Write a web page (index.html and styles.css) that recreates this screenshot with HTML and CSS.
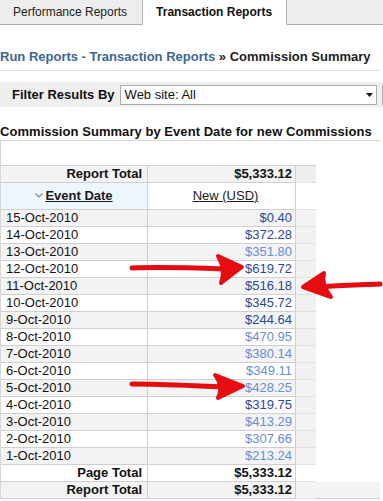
FILE: index.html
```html
<!DOCTYPE html>
<html>
<head>
<meta charset="utf-8">
<link rel="stylesheet" href="styles.css">
</head>
<body>
<div class="page">
  <div class="tabs">
    <div class="tab">Performance Reports</div>
    <div class="tab active">Transaction Reports</div>
    <div class="tab fill"></div>
  </div>

  <div class="crumbs"><span class="crumb-link">Run Reports - Transaction Reports</span> » Commission Summary</div>

  <div class="filter">
    <span class="filter-label">Filter Results By</span>
    <div class="select">
      <span class="select-text">Web site: All</span>
      <svg class="caret" width="7" height="4" viewBox="0 0 7 4"><path d="M0 0H7L3.5 4Z" fill="#111"/></svg>
    </div>
    <div class="next-ctrl"></div>
  </div>

  <div class="title">Commission Summary by Event Date for new Commissions</div>

  <div class="report">
    <table class="grid">
      <colgroup><col class="c1"><col class="c2"><col class="c3"><col class="c4"></colgroup>
      <tr class="top total">
        <td class="lab">Report Total</td><td class="amt">$5,333.12</td><td class="pad"></td><td class="rest"></td>
      </tr>
      <tr class="head">
        <td class="sorted"><svg class="chev" width="8" height="5" viewBox="0 0 8 5"><path d="M0.5 0.5L4 4L7.5 0.5" fill="none" stroke="#8a8a8a" stroke-width="1.2"/></svg><span class="hlink bold">Event Date</span></td>
        <td class="hcol"><span class="hlink">New (USD)</span></td><td class="pad white"></td><td class="rest"></td>
      </tr>
      <tr class="odd"><td>15-Oct-2010</td><td class="num dark">$0.40</td><td class="pad"></td><td class="rest"></td></tr>
      <tr><td>14-Oct-2010</td><td class="num dark">$372.28</td><td class="pad"></td><td class="rest"></td></tr>
      <tr class="odd"><td>13-Oct-2010</td><td class="num light">$351.80</td><td class="pad"></td><td class="rest"></td></tr>
      <tr><td>12-Oct-2010</td><td class="num dark">$619.72</td><td class="pad"></td><td class="rest"></td></tr>
      <tr class="odd"><td>11-Oct-2010</td><td class="num dark">$516.18</td><td class="pad"></td><td class="rest"></td></tr>
      <tr><td>10-Oct-2010</td><td class="num dark">$345.72</td><td class="pad"></td><td class="rest"></td></tr>
      <tr class="odd"><td>9-Oct-2010</td><td class="num dark">$244.64</td><td class="pad"></td><td class="rest"></td></tr>
      <tr><td>8-Oct-2010</td><td class="num light">$470.95</td><td class="pad"></td><td class="rest"></td></tr>
      <tr class="odd"><td>7-Oct-2010</td><td class="num light">$380.14</td><td class="pad"></td><td class="rest"></td></tr>
      <tr><td>6-Oct-2010</td><td class="num light">$349.11</td><td class="pad"></td><td class="rest"></td></tr>
      <tr class="odd"><td>5-Oct-2010</td><td class="num light">$428.25</td><td class="pad"></td><td class="rest"></td></tr>
      <tr><td>4-Oct-2010</td><td class="num dark">$319.75</td><td class="pad"></td><td class="rest"></td></tr>
      <tr class="odd"><td>3-Oct-2010</td><td class="num light">$413.29</td><td class="pad"></td><td class="rest"></td></tr>
      <tr><td>2-Oct-2010</td><td class="num light">$307.66</td><td class="pad"></td><td class="rest"></td></tr>
      <tr class="odd"><td>1-Oct-2010</td><td class="num light">$213.24</td><td class="pad"></td><td class="rest"></td></tr>
      <tr class="total">
        <td class="lab">Page Total</td><td class="amt">$5,333.12</td><td class="pad white"></td><td class="rest"></td>
      </tr>
      <tr class="total last">
        <td class="lab">Report Total</td><td class="amt">$5,333.12</td><td class="pad"></td><td class="rest grey"></td>
      </tr>
    </table>
  </div>

  <svg class="marks" width="383" height="501" viewBox="0 0 383 501">
    <g fill="#e60d12" stroke="#e60d12" stroke-linecap="round" stroke-linejoin="round">
      <path d="M132 268 C160 267 195 268 224 269" fill="none" stroke-width="5"/>
      <path d="M218 256 L242 267 L221 283 Q226 270 218 256 Z" stroke-width="4"/>
      <path d="M380 284 C360 285 340 285 322 287" fill="none" stroke-width="5"/>
      <path d="M303 287 L324 273 Q321 284 331 297 Z" stroke-width="4"/>
      <path d="M132 384 C165 384 195 386 226 387" fill="none" stroke-width="5"/>
      <path d="M215 375 L243 386 L218 398 Q224 386 215 375 Z" stroke-width="4"/>
    </g>
  </svg>
</div>
</body>
</html>
```

FILE: styles.css
```css
html, body {
  margin: 0;
  padding: 0;
  background: #fff;
}

.page {
  position: relative;
  width: 383px;
  height: 501px;
  overflow: hidden;
  font-family: "Liberation Sans", Arial, sans-serif;
  color: #111;
}

.tabs {
  display: flex;
  height: 25px;
}

.tab {
  box-sizing: border-box;
  height: 25px;
  font-size: 12px;
  line-height: 24px;
  padding: 0 15px 0 13px;
  background: #ededed;
  border-bottom: 1px solid #a9a9a9;
  color: #222;
  white-space: nowrap;
}

.tab.active {
  background: #fff;
  font-weight: bold;
  color: #111;
  border-left: 1px solid #b5b5b5;
  border-right: 1px solid #b5b5b5;
  border-bottom-color: #fff;
  padding: 0 14px 0 13px;
}

.tab.fill {
  flex: 1;
  padding: 0;
}

.crumbs {
  margin-top: 24px;
  margin-right: 3px;
  font-size: 13px;
  font-weight: bold;
  line-height: 15px;
  padding-bottom: 6px;
  border-bottom: 1px solid #dcdcdc;
  color: #1e1e1e;
  white-space: nowrap;
}

.crumb-link {
  color: #3a6795;
}

.filter {
  margin-top: 11px;
  height: 25px;
  background: #efefef;
  display: flex;
  align-items: center;
  padding-left: 12px;
}

.filter-label {
  font-size: 13px;
  font-weight: bold;
  color: #111;
  white-space: nowrap;
}

.select {
  box-sizing: border-box;
  margin-left: 5px;
  width: 257px;
  height: 20px;
  background: #fff;
  border: 1px solid #aaa;
  display: flex;
  align-items: center;
  padding: 0 3px 0 4px;
  flex-shrink: 0;
}

.select-text {
  flex: 1;
  font-size: 13px;
  color: #111;
}

.caret {
  display: block;
}

.next-ctrl {
  box-sizing: border-box;
  margin-left: 5px;
  width: 8px;
  height: 20px;
  background: #fff;
  border-left: 1px solid #aaa;
  flex-shrink: 0;
}

.title {
  margin-top: 17px;
  font-size: 13px;
  font-weight: bold;
  line-height: 15px;
  padding-bottom: 1px;
  white-space: nowrap;
  letter-spacing: 0.05px;
}

.report {
  box-sizing: border-box;
  width: 380px;
  border-top: 1px solid #d6d6d6;
  border-left: 1px solid #d6d6d6;
  padding-top: 24px;
}

.grid {
  width: 100%;
  table-layout: fixed;
  border-collapse: separate;
  border-spacing: 0;
  font-size: 13px;
}

.c1 { width: 147px; }
.c2 { width: 148px; }
.c3 { width: 20px; }

.grid td {
  box-sizing: border-box;
  height: 17px;
  line-height: 16px;
  padding: 0 0 0 5px;
  border-bottom: 1px solid #cfcfcf;
  white-space: nowrap;
  color: #111;
}

.grid td:nth-child(1),
.grid td:nth-child(2) {
  border-right: 1px solid #cfcfcf;
}

.grid tr.odd td {
  background: #f3f3f3;
}

.grid td.pad {
  background: #f1f1f1;
  padding: 0;
  border-bottom-color: #e2e2e2;
}

.grid td.pad.white {
  background: #fff;
}

.grid td.rest,
.grid tr.odd td.rest {
  background: #fff;
  border-bottom-color: transparent;
  padding: 0;
}

.grid tr.last td.rest.grey {
  background: #f3f3f3;
  border-bottom-color: #cfcfcf;
}

.grid tr.top td {
  border-top: 1px solid #cfcfcf;
  background: #f3f3f3;
}

.grid tr.top td.rest {
  border-top-color: transparent;
  background: #fff;
}

.grid tr.top td.pad {
  background: #efefef;
}

.grid tr.last td {
  background: #f3f3f3;
}

.grid td.lab {
  text-align: right;
  font-weight: bold;
  padding-right: 5px;
}

.grid td.amt {
  text-align: right;
  font-weight: bold;
  padding-right: 3px;
}

.grid td.num {
  text-align: right;
  padding-right: 3px;
}

.grid td.dark { color: #2a489a; }
.grid td.light { color: #6a8dd3; }

.grid tr.head td {
  height: 27px;
  text-align: center;
  padding: 0;
}

.grid tr.head td.sorted {
  background: #eef6fd;
}

.grid tr.head td.hcol {
  padding-left: 8px;
}

.chev {
  display: inline-block;
  vertical-align: middle;
  margin-right: 2px;
  position: relative;
  top: -1px;
}

.hlink {
  text-decoration: underline;
  color: #1a1a1a;
}

.hlink.bold {
  font-weight: bold;
}

.marks {
  position: absolute;
  left: 0;
  top: 0;
  pointer-events: none;
}
```
